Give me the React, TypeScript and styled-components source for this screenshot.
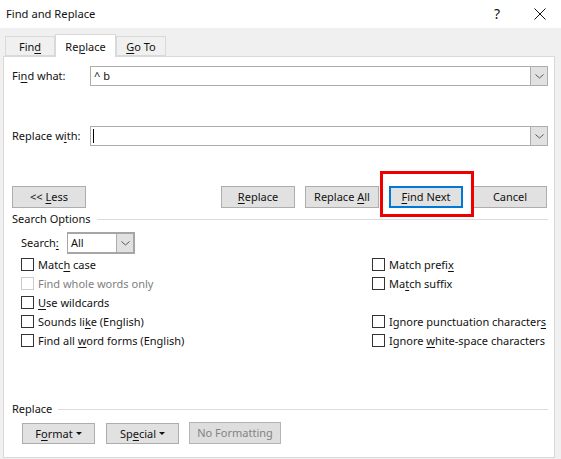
import React from "react";
import styled, { createGlobalStyle } from "styled-components";

const GlobalStyle = createGlobalStyle`
  html, body {
    margin: 0;
    padding: 0;
    background: #ffffff;
  }
  * {
    box-sizing: border-box;
  }
`;

const Dialog = styled.div`
  position: relative;
  width: 561px;
  height: 459px;
  overflow: hidden;
  background: #f0f0f0;
  color: #111111;
  font-family: "Noto Sans", "Open Sans", sans-serif;
  font-size: 11px;
  line-height: 16px;
`;

const TitleBar = styled.div`
  height: 28px;
  display: flex;
  align-items: center;
  padding-left: 6px;
  font-size: 11.2px;
  background: #ffffff;
`;

const TitleText = styled.div`
  flex: 1;
`;

const HelpGlyph = styled.div`
  width: 16px;
  margin-right: 29px;
  text-align: center;
  font-size: 14px;
`;

const CloseGlyph = styled.svg`
  width: 12px;
  height: 12px;
  margin-right: 15px;
`;

const TabStrip = styled.div`
  height: 28px;
  display: flex;
  align-items: flex-end;
  padding-left: 5px;
`;

const Tab = styled.div<{ $active?: boolean }>`
  height: ${(p) => (p.$active ? "23px" : "20px")};
  width: ${(p) => (p.$active ? "61px" : "50px")};
  margin-bottom: ${(p) => (p.$active ? "-1px" : "0")};
  padding-top: 1px;
  position: relative;
  z-index: ${(p) => (p.$active ? 2 : 1)};
  display: flex;
  align-items: center;
  justify-content: center;
  background: ${(p) => (p.$active ? "#ffffff" : "#f0f0f0")};
  border: 1px solid #d9d9d9;
  border-bottom: ${(p) => (p.$active ? "none" : "1px solid #d9d9d9")};
`;

const Panel = styled.div`
  height: 402px;
  margin: 0 6px 0 3px;
  padding: 9px 6px 0 8px;
  background: #ffffff;
  border: 1px solid #d9d9d9;
  display: flex;
  flex-direction: column;
`;

const FieldRow = styled.div<{ $gap: number }>`
  display: flex;
  align-items: center;
  height: 20px;
  margin-bottom: ${(p) => p.$gap}px;
`;

const FieldLabel = styled.div`
  width: 78px;
`;

const ComboBox = styled.div`
  flex: 1;
  height: 20px;
  display: flex;
  border: 1px solid #adadad;
  background: #ffffff;
`;

const ComboText = styled.div`
  flex: 1;
  padding-left: 3px;
  line-height: 18px;
`;

const Caret = styled.div`
  width: 1px;
  height: 14px;
  margin: 2px 0 0 2px;
  background: #000000;
`;

const ComboButton = styled.div`
  width: 17px;
  background: #e1e1e1;
  border-left: 1px solid #adadad;
  display: flex;
  align-items: center;
  justify-content: center;
`;

const ButtonRow = styled.div`
  display: flex;
  height: 22px;
  margin-right: 1px;
`;

const Spacer = styled.div`
  flex: 1;
`;

const Button = styled.div<{ $primary?: boolean; $disabled?: boolean }>`
  width: 74px;
  height: 22px;
  margin-right: 10px;
  display: flex;
  align-items: center;
  justify-content: center;
  white-space: pre;
  background: #e1e1e1;
  border: ${(p) => (p.$primary ? "2px solid #0078d7" : "1px solid #adadad")};
  color: ${(p) => (p.$disabled ? "#838383" : "#111111")};
`;

const LastButton = styled(Button)`
  margin-right: 0;
`;

const SectionHeading = styled.div<{ $top: number }>`
  display: flex;
  align-items: center;
  gap: 6px;
  margin-top: ${(p) => p.$top}px;
  height: 16px;
`;

const SectionRule = styled.div`
  flex: 1;
  height: 1px;
  background: #dcdcdc;
`;

const SearchRow = styled.div`
  display: flex;
  align-items: center;
  margin: 5px 0 0 9px;
  height: 22px;
`;

const SearchLabel = styled.div`
  width: 46px;
`;

const SearchSelect = styled.div`
  width: 68px;
  height: 22px;
  display: flex;
  border: 2px solid #a6a6a6;
  border-left-width: 1px;
  background: #ffffff;
`;

const SelectText = styled.div`
  flex: 1;
  padding-left: 3px;
  line-height: 18px;
`;

const Options = styled.div`
  display: flex;
  justify-content: space-between;
  width: 524px;
  margin: 1px 0 0 9px;
`;

const OptionColumn = styled.div<{ $width?: number }>`
  display: flex;
  flex-direction: column;
  width: ${(p) => (p.$width ? `${p.$width}px` : "auto")};
`;

const Option = styled.div<{ $disabled?: boolean }>`
  height: 19px;
  display: flex;
  align-items: center;
  gap: 4px;
  white-space: nowrap;
  color: ${(p) => (p.$disabled ? "#808080" : "#111111")};
`;

const Check = styled.div<{ $disabled?: boolean }>`
  width: 13px;
  height: 13px;
  flex: none;
  background: #ffffff;
  border: 1px solid ${(p) => (p.$disabled ? "#cccccc" : "#333333")};
`;

const OptionGap = styled.div`
  height: 19px;
`;

const BottomRow = styled.div`
  display: flex;
  align-items: flex-start;
  margin: 5px 0 0 10px;
`;

const MenuButton = styled(Button)`
  margin-right: 11px;
  width: 73px;
  height: 21px;
  margin-top: 1px;
  gap: 3px;
`;

const DisabledButton = styled(Button)`
  width: 92px;
  margin: 0 0 0 -1px;
  border-color: #b4b4b4;
  background: #dedede;
`;

const MenuArrow = styled.span`
  width: 0;
  height: 0;
  border-left: 3px solid transparent;
  border-right: 3px solid transparent;
  border-top: 3px solid #111111;
`;

const Highlight = styled.div`
  position: absolute;
  left: 380px;
  top: 171px;
  width: 94px;
  height: 46px;
  border: 3px solid #ee0000;
  pointer-events: none;
`;

const Key = styled.span`
  text-decoration: underline;
  text-underline-offset: 2px;
  text-decoration-thickness: 1px;
`;

const Chevron = () => (
  <svg width="9" height="5" viewBox="0 0 9 5">
    <path d="M0.5 0.5 L4.5 4 L8.5 0.5" fill="none" stroke="#555555" strokeWidth="1" />
  </svg>
);

export default function App() {
  return (
    <Dialog>
      <GlobalStyle />
      <TitleBar>
        <TitleText>Find and Replace</TitleText>
        <HelpGlyph>?</HelpGlyph>
        <CloseGlyph viewBox="0 0 12 12">
          <path d="M0.5 0.5 L11.5 11.5 M11.5 0.5 L0.5 11.5" stroke="#111111" strokeWidth="1" fill="none" />
        </CloseGlyph>
      </TitleBar>
      <TabStrip>
        <Tab><span>Fin<Key>d</Key></span></Tab>
        <Tab $active><span>Re<Key>p</Key>lace</span></Tab>
        <Tab><span><Key>G</Key>o To</span></Tab>
      </TabStrip>
      <Panel>
        <FieldRow $gap={40}>
          <FieldLabel>Fi<Key>n</Key>d what:</FieldLabel>
          <ComboBox>
            <ComboText>^ b</ComboText>
            <ComboButton><Chevron /></ComboButton>
          </ComboBox>
        </FieldRow>
        <FieldRow $gap={40}>
          <FieldLabel>Replace w<Key>i</Key>th:</FieldLabel>
          <ComboBox>
            <Caret />
            <ComboText />
            <ComboButton><Chevron /></ComboButton>
          </ComboBox>
        </FieldRow>
        <ButtonRow>
          <Button><span>&lt;&lt; <Key>L</Key>ess</span></Button>
          <Spacer />
          <Button><span><Key>R</Key>eplace</span></Button>
          <Button><span>Replace <Key>A</Key>ll</span></Button>
          <Button $primary><span><Key>F</Key>ind Next</span></Button>
          <LastButton>Cancel</LastButton>
        </ButtonRow>
        <SectionHeading $top={3}>
          Search Options
          <SectionRule />
        </SectionHeading>
        <SearchRow>
          <SearchLabel>Search<Key>:</Key></SearchLabel>
          <SearchSelect>
            <SelectText>All</SelectText>
            <ComboButton><Chevron /></ComboButton>
          </SearchSelect>
        </SearchRow>
        <Options>
          <OptionColumn>
            <Option><Check /><span>Matc<Key>h</Key> case</span></Option>
            <Option $disabled><Check $disabled /><span>Find whole words only</span></Option>
            <Option><Check /><span><Key>U</Key>se wildcards</span></Option>
            <Option><Check /><span>Sounds li<Key>k</Key>e (English)</span></Option>
            <Option><Check /><span>Find all <Key>w</Key>ord forms (English)</span></Option>
          </OptionColumn>
          <OptionColumn $width={173}>
            <Option><Check /><span>Match prefi<Key>x</Key></span></Option>
            <Option><Check /><span>Ma<Key>t</Key>ch suffix</span></Option>
            <OptionGap />
            <Option><Check /><span>Ignore punctuation character<Key>s</Key></span></Option>
            <Option><Check /><span>Ignore <Key>w</Key>hite-space characters</span></Option>
          </OptionColumn>
        </Options>
        <SectionHeading $top={51}>
          Replace
          <SectionRule />
        </SectionHeading>
        <BottomRow>
          <MenuButton><span>F<Key>o</Key>rmat</span><MenuArrow /></MenuButton>
          <MenuButton><span>Sp<Key>e</Key>cial</span><MenuArrow /></MenuButton>
          <DisabledButton $disabled>No Formatting</DisabledButton>
        </BottomRow>
      </Panel>
      <Highlight />
    </Dialog>
  );
}
